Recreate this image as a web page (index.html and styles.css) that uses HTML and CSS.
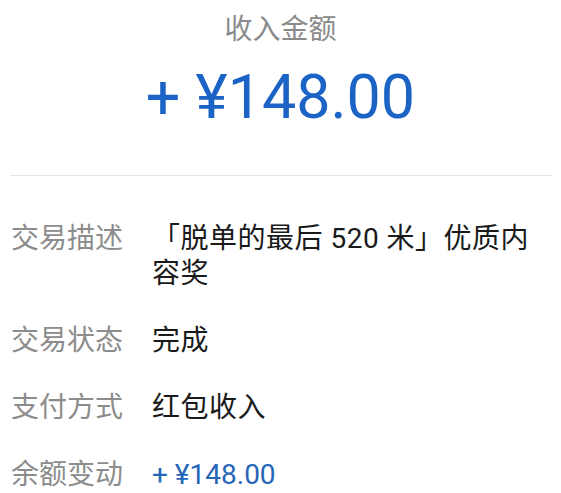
FILE: index.html
```html
<!DOCTYPE html>
<html lang="zh-CN">
<head>
  <meta charset="UTF-8" />
  <meta name="viewport" content="width=device-width, initial-scale=1.0"/>
  <title>收入金额</title>
  <link rel="stylesheet" href="styles.css">
</head>
<body>

<div class="summary">
  <div class="summary-title">收入金额</div>
  <div class="summary-amount">+ ¥148.00</div>
</div>

<div class="divider"></div>

<div class="details">
  <div class="row">
    <div class="label">交易描述</div>
    <div class="value">「脱单的最后 520 米」优质内容奖</div>
  </div>
  <div class="row">
    <div class="label">交易状态</div>
    <div class="value">完成</div>
  </div>
  <div class="row">
    <div class="label">支付方式</div>
    <div class="value">红包收入</div>
  </div>
  <div class="row">
    <div class="label">余额变动</div>
    <div class="value money">+ ¥148.00</div>
  </div>
</div>

</body>
</html>
```

FILE: styles.css
```css
body {
  margin: 0;
  padding: 0;
  background: #fff;
  font-family: Roboto, "Noto Sans CJK SC", sans-serif;
  color: #1a1a1a;
}

.summary {
  text-align: center;
  padding-top: 12px;
}

.summary-title {
  font-size: 28px;
  line-height: 36px;
  color: #8a8a8a;
}

.summary-amount {
  margin-top: 14px;
  font-size: 61px;
  line-height: 70px;
  color: #1c63c6;
}

.divider {
  height: 1px;
  background: #e6e6e6;
  margin: 43px 8px 0 10px;
}

.details {
  padding: 45px 16px 0 11px;
  display: flex;
  flex-direction: column;
  gap: 32px;
}

.row {
  display: grid;
  grid-template-columns: 141px 1fr;
  font-size: 28px;
  line-height: 35px;
}

.label {
  color: #8c8c8c;
}

.value {
  color: #1a1a1a;
  letter-spacing: 0.5px;
}

.value.money {
  color: #2566b8;
  letter-spacing: 0;
}
```
